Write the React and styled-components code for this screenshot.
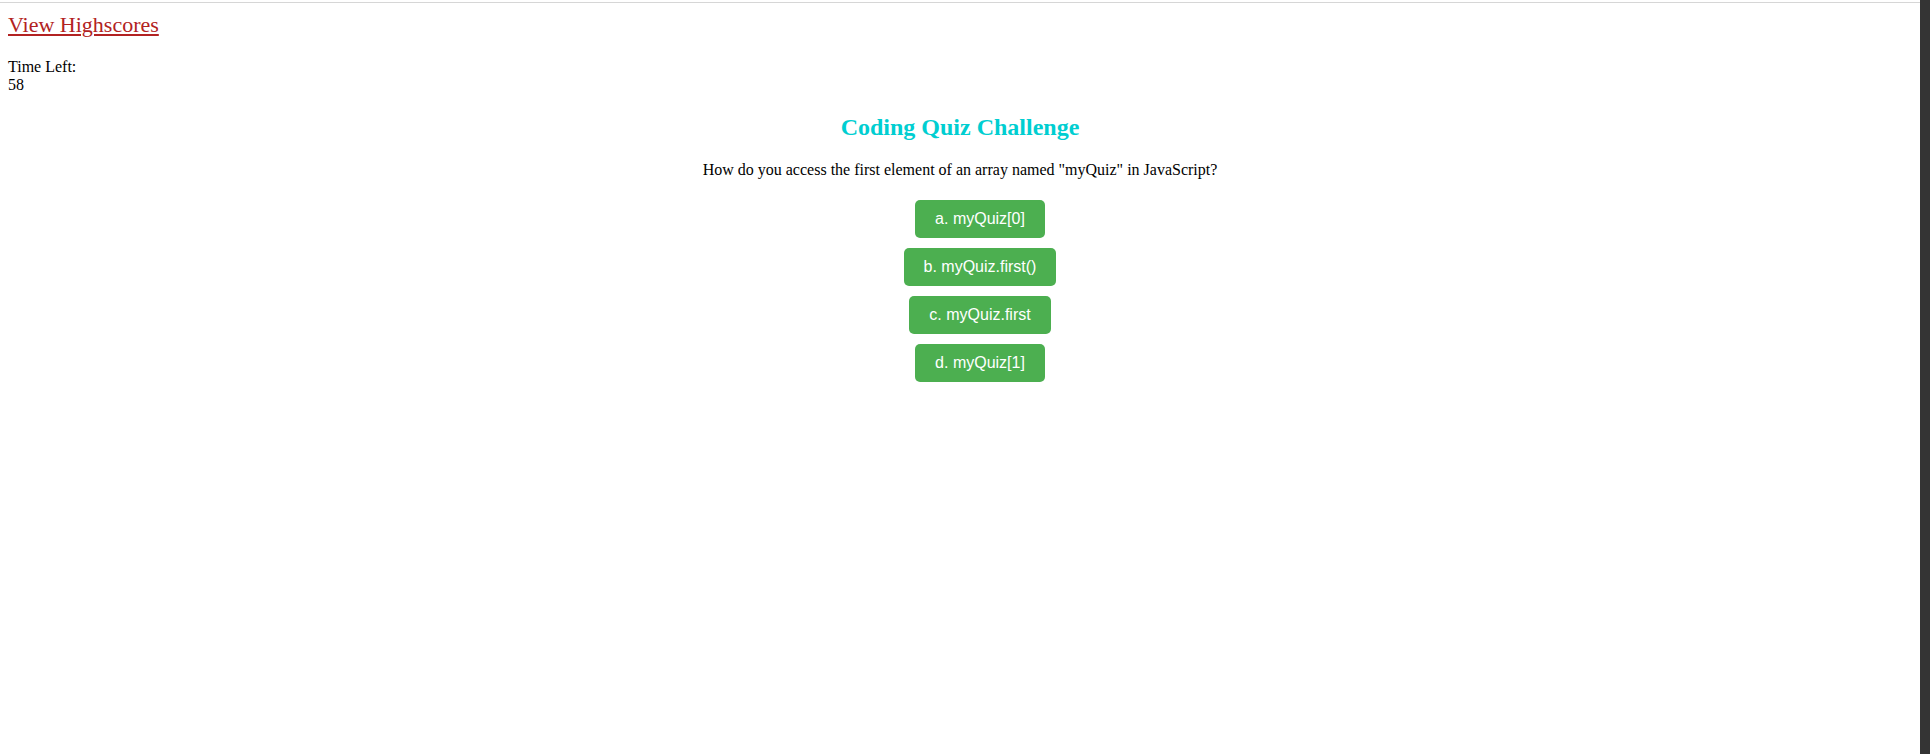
import React from 'react'
import styled, { createGlobalStyle } from 'styled-components'

const questions = [
  {
    title: 'How do you access the first element of an array named "myQuiz" in JavaScript?',
    choices: ['a. myQuiz[0]', 'b. myQuiz.first()', 'c. myQuiz.first', 'd. myQuiz[1]'],
  },
]

const App = () => {
  const current = questions[0]
  return (
    <Shell>
      <GlobalStyle />
      <Page>
        <Header>
          <HighscoresLink href="#highscores">View Highscores</HighscoresLink>
        </Header>

        <Timer>
          Time Left:
          <br />
          58
        </Timer>

        <Title>Coding Quiz Challenge</Title>
        <Question>{current.title}</Question>

        <Choices>
          {current.choices.map((choice) => (
            <li key={choice}>
              <ChoiceButton type="button">{choice}</ChoiceButton>
            </li>
          ))}
        </Choices>
      </Page>
      <Scrollbar />
    </Shell>
  )
}

const GlobalStyle = createGlobalStyle`
  html, body {
    margin: 0;
    background: #ffffff;
  }
  body {
    font-family: "Liberation Serif", "Times New Roman", serif;
    font-size: 16px;
    color: #000;
  }
`

const Shell = styled.div`
  display: flex;
  min-height: 100vh;
`

const Page = styled.main`
  flex: 1;
  margin-top: 2px;
  border-top: 1px solid #d6d6d6;
  padding: 9px 8px 8px;
`

const Scrollbar = styled.div`
  width: 10px;
  flex-shrink: 0;
  background: #343434;
`

const Header = styled.div`
  font-size: 22px;
`

const HighscoresLink = styled.a`
  color: #b22222;
  text-decoration: underline;
`

const Timer = styled.div`
  margin-top: 20px;
`

const Title = styled.h2`
  margin: 19.9px 0;
  font-size: 24px;
  font-weight: bold;
  text-align: center;
  color: #00ced1;
`

const Question = styled.p`
  margin: 16px 0;
  text-align: center;
`

const Choices = styled.ul`
  list-style: none;
  margin: 16px 0;
  padding: 5px 0 0 40px;
  display: flex;
  flex-direction: column;
  align-items: center;
  gap: 10px;
`

const ChoiceButton = styled.button`
  background: #4caf50;
  color: #ffffff;
  border: none;
  border-radius: 5px;
  padding: 10px 20px;
  font-family: "Liberation Sans", Arial, sans-serif;
  font-size: 16px;
  line-height: normal;
  cursor: pointer;
`

export default App
